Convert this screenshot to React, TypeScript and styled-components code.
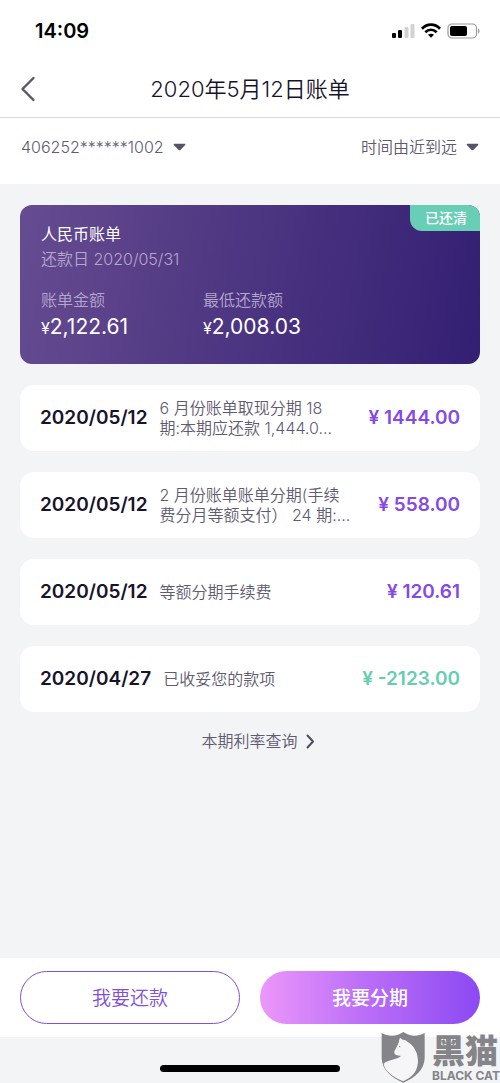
import React from "react";
import styled, { createGlobalStyle } from "styled-components";

const GlobalStyle = createGlobalStyle`
  *, *::before, *::after { box-sizing: border-box; }
  body {
    margin: 0;
    background: #f3f4f6;
    color: #17132a;
    font-family: Inter, "Noto Sans CJK SC", sans-serif;
  }
  button, select { font-family: inherit; }
  h1, h2, p, ul, dl, dd { margin: 0; padding: 0; }
`;

const Page = styled.div`
  position: relative;
  display: flex;
  flex-direction: column;
  min-height: 100vh;
`;

const StatusBar = styled.div`
  display: flex;
  align-items: center;
  justify-content: space-between;
  height: 60px;
  padding: 2px 20px 0 35px;
  background: #fff;
`;

const Clock = styled.time`
  color: #000;
  font-size: 20px;
  font-weight: 600;
  line-height: 24px;
`;

const StatusIcons = styled.div`
  display: flex;
  align-items: center;
  gap: 6px;
`;

const Header = styled.header`
  display: grid;
  grid-template-columns: 32px 1fr 32px;
  align-items: center;
  height: 58px;
  padding: 0 12px;
  border-bottom: 1px solid #d8d8dc;
  background: #fff;
`;

const BackButton = styled.button`
  display: flex;
  justify-content: center;
  padding: 0;
  border: 0;
  background: none;
  color: #5a5766;
`;

const Title = styled.h1`
  font-size: 22px;
  font-weight: 350;
  line-height: 32px;
  text-align: center;
`;

const Filters = styled.div`
  display: flex;
  justify-content: space-between;
  height: 66px;
  padding: 16px 21px 0;
  background: #fff;
`;

const Picker = styled.label`
  display: flex;
  align-items: center;
  gap: 9px;
  height: 26px;
  color: #5f5b70;
`;

const PickerSelect = styled.select`
  appearance: none;
  field-sizing: content;
  padding: 0;
  border: 0;
  background: none;
  color: inherit;
  font-size: 16px;
  font-weight: 350;
  line-height: 24px;
`;

const Content = styled.main`
  display: flex;
  flex: 1;
  flex-direction: column;
  padding: 21px 20px;
`;

const SummaryCard = styled.section`
  position: relative;
  height: 159px;
  padding: 17px 21px;
  overflow: hidden;
  border-radius: 12px;
  background: linear-gradient(100deg, #664c91 0%, #523a84 38%, #331f73 100%);
  color: #fff;
`;

const PaidBadge = styled.span`
  position: absolute;
  top: 0;
  right: 0;
  padding: 0 13px 0 15px;
  border-bottom-left-radius: 12px;
  background: #68cfb6;
  font-size: 14px;
  font-weight: 500;
  line-height: 26px;
`;

const SummaryTitle = styled.h2`
  font-size: 16px;
  font-weight: 400;
  line-height: 25px;
`;

const DueDate = styled.p`
  color: #b5a6cc;
  font-size: 16px;
  font-weight: 350;
  line-height: 25px;
`;

const Figures = styled.dl`
  display: grid;
  grid-template-columns: 162px 1fr;
  margin-top: 15px;
`;

const FigureLabel = styled.dt`
  color: #b5a6cc;
  font-size: 16px;
  font-weight: 350;
  line-height: 26px;
`;

const FigureValue = styled.dd`
  font-size: 21px;
  line-height: 28px;
`;

const Currency = styled.span`
  font-size: 16px;
`;

const Entries = styled.ul`
  display: flex;
  flex-direction: column;
  gap: 21px;
  margin-top: 21px;
  list-style: none;
`;

const Entry = styled.li`
  display: flex;
  align-items: center;
  height: 66px;
  padding: 0 20px;
  border-radius: 14px;
  background: #fff;
`;

const EntryDate = styled.time`
  flex: none;
  font-size: 19px;
  font-weight: 600;
  line-height: 24px;
`;

const EntryText = styled.p`
  flex: 1;
  margin: 0 24px 0 12px;
  color: #5f5b70;
  font-size: 16px;
  font-weight: 350;
  line-height: 20px;
`;

const Amount = styled.span<{ $credit?: boolean }>`
  flex: none;
  color: ${(p) => (p.$credit ? "#65cdb2" : "#8449e6")};
  font-size: 19px;
  font-weight: 600;
  line-height: 24px;
`;

const RateLink = styled.a`
  display: flex;
  align-items: center;
  align-self: center;
  gap: 8px;
  margin: 17px 0 0 16px;
  color: #5f5b70;
  font-size: 16px;
  font-weight: 350;
  line-height: 24px;
  text-decoration: none;
`;

const Actions = styled.footer`
  display: grid;
  grid-template-columns: 1fr 1fr;
  gap: 20px;
  height: 79px;
  padding: 13px 20px;
  background: #fff;
`;

const ActionButton = styled.button<{ $primary?: boolean }>`
  padding: 0 0 3px;
  border: ${(p) => (p.$primary ? "0" : "1px solid #8250d8")};
  border-radius: 27px;
  background: ${(p) =>
    p.$primary ? "linear-gradient(90deg, #ec97fa 0%, #bd70f7 45%, #8c49f3 100%)" : "#fff"};
  color: ${(p) => (p.$primary ? "#fff" : "#8250d8")};
  font-size: 19px;
  font-weight: ${(p) => (p.$primary ? 500 : 350)};
`;

const HomeArea = styled.div`
  display: flex;
  align-items: flex-end;
  justify-content: center;
  height: 46px;
  padding-bottom: 11px;
`;

const HomeIndicator = styled.div`
  width: 36%;
  height: 7px;
  border-radius: 4px;
  background: #000;
`;

const Watermark = styled.div`
  position: absolute;
  right: 0;
  bottom: 0;
  display: flex;
  align-items: flex-end;
  gap: 7px;
  color: #858488;
  pointer-events: none;
`;

const WatermarkText = styled.div`
  display: flex;
  flex-direction: column;
  align-items: flex-start;
`;

const WatermarkName = styled.span`
  font-size: 33px;
  font-weight: 900;
  line-height: 36px;
`;

const WatermarkLatin = styled.span`
  font-size: 12px;
  font-weight: 700;
  line-height: 14px;
`;

const SignalIcon = () => (
  <svg width="23" height="16" viewBox="0 0 23 16" aria-hidden="true">
    <rect x="0" y="10" width="4" height="5" rx="1" />
    <rect x="6" y="7" width="4" height="8" rx="1" />
    <rect x="12.500" y="4" width="4" height="11" rx="1" fill="#d2d2d2" />
    <rect x="18.500" y="1" width="4" height="14" rx="1" fill="#d2d2d2" />
  </svg>
);

const WifiIcon = () => (
  <svg width="20" height="16" viewBox="0 0 20 16" aria-hidden="true">
    <g fill="none" stroke="#000" strokeWidth="2.700">
      <path d="M1 5.700C6.100 .3 13.900 .3 19 5.700" />
      <path d="M4.300 9.200c3.300-3.300 8.100-3.300 11.400 0" />
    </g>
    <path d="M7 11.700c1.800-1.400 4.200-1.400 6 0l-3 3.100z" />
  </svg>
);

const BatteryIcon = () => (
  <svg width="33" height="16" viewBox="0 0 33 16" aria-hidden="true">
    <rect x="1" y="1" width="28.500" height="14" rx="4" fill="none" stroke="#9b9b9b" strokeWidth="1.200" />
    <rect x="3" y="3" width="17" height="10" rx="2" />
    <path d="M31 5.500c2 .6 2 4.400 0 5z" fill="#9b9b9b" />
  </svg>
);

const BackIcon = () => (
  <svg width="16" height="26" viewBox="0 0 16 26" fill="none" aria-hidden="true">
    <path d="M13.500 2 2.500 13l11 11" stroke="currentColor" strokeWidth="2.400" strokeLinecap="round" strokeLinejoin="round" />
  </svg>
);

const CaretIcon = () => (
  <svg width="13" height="8" viewBox="0 0 13 8" aria-hidden="true">
    <path d="M1.200.8h10.600q1 .3.400 1.200L7.400 6.900q-.9.700-1.800 0L.8 2Q.2 1.100 1.200.8z" fill="#575367" />
  </svg>
);

const ChevronIcon = () => (
  <svg width="9" height="15" viewBox="0 0 9 15" fill="none" aria-hidden="true">
    <path d="m1.500 1.500 5.500 6-5.500 6" stroke="#4f4b5e" strokeWidth="2" strokeLinecap="round" strokeLinejoin="round" />
  </svg>
);

const CatShield = () => (
  <svg width="44" height="51" viewBox="0 0 132 153" aria-hidden="true">
    <path
      d="M2 3C25 15 48 13 67 0 86 13 108 15 131 3V78C130 112 105 136 67 152 29 136 3 112 2 78z"
      fill="currentColor"
    />
    <path
      d="M57 17 65 23Q74 22 79 29C102 42 111 66 111 88 110 111 101 127 83 139L67 148C37 135 11 118 8 95 20 82 48 84 60 72L48 70C40 68 38 60 42 54L49 41 54 29Q54 23 57 17z"
      fill="#f6f6f8"
    />
    <circle cx="56" cy="44" r="2" fill="currentColor" />
  </svg>
);

interface EntryData {
  date: string;
  text: string;
  amount: string;
  credit?: boolean;
}

const entries: EntryData[] = [
  { date: "2020/05/12", text: "6 月份账单取现分期 18 期:本期应还款 1,444.0...", amount: "¥ 1444.00" },
  { date: "2020/05/12", text: "2 月份账单账单分期(手续费分月等额支付） 24 期:...", amount: "¥ 558.00" },
  { date: "2020/05/12", text: "等额分期手续费", amount: "¥ 120.61" },
  { date: "2020/04/27", text: "已收妥您的款项", amount: "¥ -2123.00", credit: true },
];

export default function App() {
  return (
    <>
      <GlobalStyle />
      <Page>
        <StatusBar>
          <Clock>14:09</Clock>
          <StatusIcons>
            <SignalIcon />
            <WifiIcon />
            <BatteryIcon />
          </StatusIcons>
        </StatusBar>
        <Header>
          <BackButton type="button" aria-label="返回">
            <BackIcon />
          </BackButton>
          <Title>2020年5月12日账单</Title>
        </Header>
        <Filters>
          <Picker>
            <PickerSelect aria-label="卡号">
              <option>406252******1002</option>
            </PickerSelect>
            <CaretIcon />
          </Picker>
          <Picker>
            <PickerSelect aria-label="排序">
              <option>时间由近到远</option>
            </PickerSelect>
            <CaretIcon />
          </Picker>
        </Filters>
        <Content>
          <SummaryCard>
            <PaidBadge>已还清</PaidBadge>
            <SummaryTitle>人民币账单</SummaryTitle>
            <DueDate>还款日 2020/05/31</DueDate>
            <Figures>
              <div>
                <FigureLabel>账单金额</FigureLabel>
                <FigureValue>
                  <Currency>¥</Currency>2,122.61
                </FigureValue>
              </div>
              <div>
                <FigureLabel>最低还款额</FigureLabel>
                <FigureValue>
                  <Currency>¥</Currency>2,008.03
                </FigureValue>
              </div>
            </Figures>
          </SummaryCard>
          <Entries>
            {entries.map((e) => (
              <Entry key={e.text}>
                <EntryDate>{e.date}</EntryDate>
                <EntryText>{e.text}</EntryText>
                <Amount $credit={e.credit}>{e.amount}</Amount>
              </Entry>
            ))}
          </Entries>
          <RateLink href="#rates">
            本期利率查询
            <ChevronIcon />
          </RateLink>
        </Content>
        <Actions>
          <ActionButton type="button">我要还款</ActionButton>
          <ActionButton type="button" $primary>
            我要分期
          </ActionButton>
        </Actions>
        <HomeArea>
          <HomeIndicator />
        </HomeArea>
        <Watermark>
          <CatShield />
          <WatermarkText>
            <WatermarkName>黑猫</WatermarkName>
            <WatermarkLatin>BLACK CAT</WatermarkLatin>
          </WatermarkText>
        </Watermark>
      </Page>
    </>
  );
}
